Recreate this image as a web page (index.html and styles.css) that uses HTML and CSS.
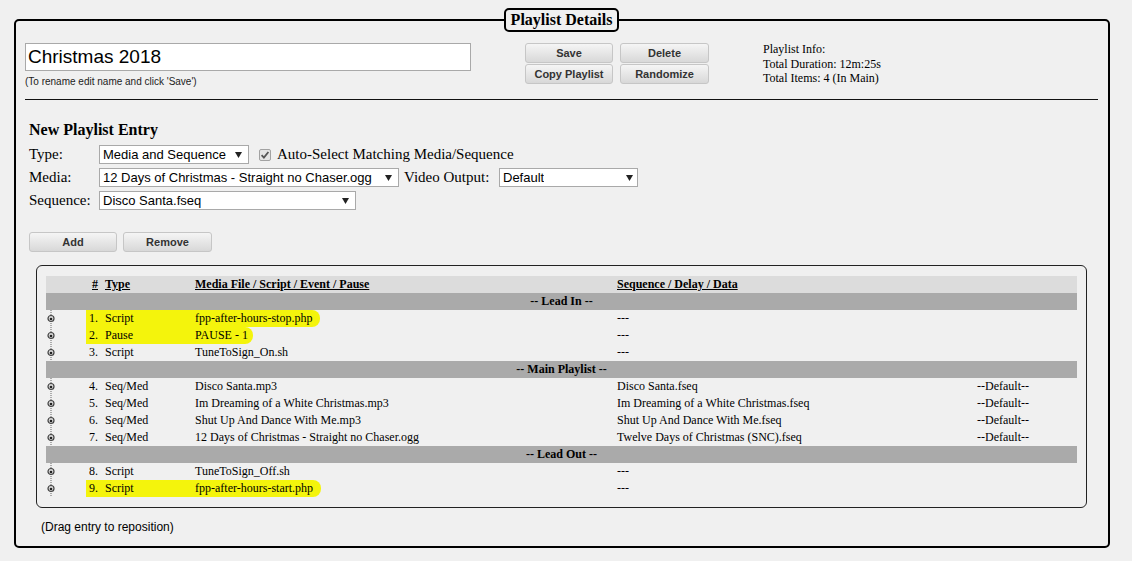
FILE: index.html
```html
<!DOCTYPE html>
<html>
<head>
<meta charset="utf-8">
<title>Playlist Details</title>
<link rel="stylesheet" href="styles.css">
</head>
<body>
<fieldset class="details">
  <legend class="details-legend">Playlist Details</legend>
  <div class="top">
    <div class="name-col">
      <div class="name-input">Christmas 2018</div>
      <div class="note">(To rename edit name and click 'Save')</div>
    </div>
    <div class="btn-grid">
      <div class="btn">Save</div>
      <div class="btn">Delete</div>
      <div class="btn">Copy Playlist</div>
      <div class="btn">Randomize</div>
    </div>
    <div class="info">
      <div>Playlist Info:</div>
      <div>Total Duration: 12m:25s</div>
      <div>Total Items: 4 (In Main)</div>
    </div>
  </div>
  <div class="rule"></div>

  <div class="entry">
    <div class="entry-title">New Playlist Entry</div>
    <div class="form-row">
      <span class="label">Type:</span>
      <span class="select sel-type"><span class="sel-text">Media and Sequence</span><svg class="arrow" width="7" height="6" viewBox="0 0 7 6"><path d="M0 0H7L3.5 6Z" fill="#222"/></svg></span>
      <svg class="check" width="12" height="12" viewBox="0 0 12 12"><rect x="0.5" y="0.5" width="11" height="11" rx="1.5" fill="#e4e4e4" stroke="#a2a2a2"/><path d="M2.6 6.2L4.9 8.6L9.4 3" fill="none" stroke="#555" stroke-width="1.8"/></svg>
      <span class="check-label">Auto-Select Matching Media/Sequence</span>
    </div>
    <div class="form-row">
      <span class="label">Media:</span>
      <span class="select sel-media"><span class="sel-text">12 Days of Christmas - Straight no Chaser.ogg</span><svg class="arrow" width="7" height="6" viewBox="0 0 7 6"><path d="M0 0H7L3.5 6Z" fill="#222"/></svg></span>
      <span class="label-video">Video Output:</span>
      <span class="select sel-video"><span class="sel-text">Default</span><svg class="arrow" width="7" height="6" viewBox="0 0 7 6"><path d="M0 0H7L3.5 6Z" fill="#222"/></svg></span>
    </div>
    <div class="form-row">
      <span class="label">Sequence:</span>
      <span class="select sel-seq"><span class="sel-text">Disco Santa.fseq</span><svg class="arrow" width="7" height="6" viewBox="0 0 7 6"><path d="M0 0H7L3.5 6Z" fill="#222"/></svg></span>
    </div>
    <div class="actions">
      <div class="btn btn-add">Add</div>
      <div class="btn btn-remove">Remove</div>
    </div>
  </div>

  <div class="entries">
    <table class="plist">
      <colgroup>
        <col class="c-handle"><col class="c-num"><col class="c-type"><col class="c-media"><col class="c-seq"><col>
      </colgroup>
      <thead>
        <tr class="head">
          <th></th><th class="num"><u>#</u></th><th class="type"><u>Type</u></th><th class="media"><u>Media File / Script / Event / Pause</u></th><th class="seq"><u>Sequence / Delay / Data</u></th><th></th>
        </tr>
      </thead>
      <tbody>
        <tr class="section"><td colspan="6">-- Lead In --</td></tr>
        <tr class="hl">
          <td class="handle"><svg width="10" height="17" viewBox="0 0 10 17"><g fill="#666"><rect x="4.5" y="0" width="1" height="1"/><rect x="4.5" y="2" width="1" height="1"/><rect x="4.5" y="4" width="1" height="1"/><rect x="4.5" y="13" width="1" height="1"/><rect x="4.5" y="15" width="1" height="1"/></g><circle cx="5" cy="8.5" r="3" fill="#d8d8d8" stroke="#444" stroke-width="1.2"/><circle cx="5" cy="9" r="1.3" fill="#222"/></svg></td>
          <td class="num">1.</td><td class="type">Script</td><td class="media"><span class="mark mark-1">fpp-after-hours-stop.php</span></td><td class="seq">---</td><td class="def"></td>
        </tr>
        <tr class="hl">
          <td class="handle"><svg width="10" height="17" viewBox="0 0 10 17"><g fill="#666"><rect x="4.5" y="0" width="1" height="1"/><rect x="4.5" y="2" width="1" height="1"/><rect x="4.5" y="4" width="1" height="1"/><rect x="4.5" y="13" width="1" height="1"/><rect x="4.5" y="15" width="1" height="1"/></g><circle cx="5" cy="8.5" r="3" fill="#d8d8d8" stroke="#444" stroke-width="1.2"/><circle cx="5" cy="9" r="1.3" fill="#222"/></svg></td>
          <td class="num">2.</td><td class="type">Pause</td><td class="media"><span class="mark mark-2">PAUSE - 1</span></td><td class="seq">---</td><td class="def"></td>
        </tr>
        <tr>
          <td class="handle"><svg width="10" height="17" viewBox="0 0 10 17"><g fill="#666"><rect x="4.5" y="0" width="1" height="1"/><rect x="4.5" y="2" width="1" height="1"/><rect x="4.5" y="4" width="1" height="1"/><rect x="4.5" y="13" width="1" height="1"/><rect x="4.5" y="15" width="1" height="1"/></g><circle cx="5" cy="8.5" r="3" fill="#d8d8d8" stroke="#444" stroke-width="1.2"/><circle cx="5" cy="9" r="1.3" fill="#222"/></svg></td>
          <td class="num">3.</td><td class="type">Script</td><td class="media">TuneToSign_On.sh</td><td class="seq">---</td><td class="def"></td>
        </tr>
        <tr class="section"><td colspan="6">-- Main Playlist --</td></tr>
        <tr>
          <td class="handle"><svg width="10" height="17" viewBox="0 0 10 17"><g fill="#666"><rect x="4.5" y="0" width="1" height="1"/><rect x="4.5" y="2" width="1" height="1"/><rect x="4.5" y="4" width="1" height="1"/><rect x="4.5" y="13" width="1" height="1"/><rect x="4.5" y="15" width="1" height="1"/></g><circle cx="5" cy="8.5" r="3" fill="#d8d8d8" stroke="#444" stroke-width="1.2"/><circle cx="5" cy="9" r="1.3" fill="#222"/></svg></td>
          <td class="num">4.</td><td class="type">Seq/Med</td><td class="media">Disco Santa.mp3</td><td class="seq">Disco Santa.fseq</td><td class="def">--Default--</td>
        </tr>
        <tr>
          <td class="handle"><svg width="10" height="17" viewBox="0 0 10 17"><g fill="#666"><rect x="4.5" y="0" width="1" height="1"/><rect x="4.5" y="2" width="1" height="1"/><rect x="4.5" y="4" width="1" height="1"/><rect x="4.5" y="13" width="1" height="1"/><rect x="4.5" y="15" width="1" height="1"/></g><circle cx="5" cy="8.5" r="3" fill="#d8d8d8" stroke="#444" stroke-width="1.2"/><circle cx="5" cy="9" r="1.3" fill="#222"/></svg></td>
          <td class="num">5.</td><td class="type">Seq/Med</td><td class="media">Im Dreaming of a White Christmas.mp3</td><td class="seq">Im Dreaming of a White Christmas.fseq</td><td class="def">--Default--</td>
        </tr>
        <tr>
          <td class="handle"><svg width="10" height="17" viewBox="0 0 10 17"><g fill="#666"><rect x="4.5" y="0" width="1" height="1"/><rect x="4.5" y="2" width="1" height="1"/><rect x="4.5" y="4" width="1" height="1"/><rect x="4.5" y="13" width="1" height="1"/><rect x="4.5" y="15" width="1" height="1"/></g><circle cx="5" cy="8.5" r="3" fill="#d8d8d8" stroke="#444" stroke-width="1.2"/><circle cx="5" cy="9" r="1.3" fill="#222"/></svg></td>
          <td class="num">6.</td><td class="type">Seq/Med</td><td class="media">Shut Up And Dance With Me.mp3</td><td class="seq">Shut Up And Dance With Me.fseq</td><td class="def">--Default--</td>
        </tr>
        <tr>
          <td class="handle"><svg width="10" height="17" viewBox="0 0 10 17"><g fill="#666"><rect x="4.5" y="0" width="1" height="1"/><rect x="4.5" y="2" width="1" height="1"/><rect x="4.5" y="4" width="1" height="1"/><rect x="4.5" y="13" width="1" height="1"/><rect x="4.5" y="15" width="1" height="1"/></g><circle cx="5" cy="8.5" r="3" fill="#d8d8d8" stroke="#444" stroke-width="1.2"/><circle cx="5" cy="9" r="1.3" fill="#222"/></svg></td>
          <td class="num">7.</td><td class="type">Seq/Med</td><td class="media">12 Days of Christmas - Straight no Chaser.ogg</td><td class="seq">Twelve Days of Christmas (SNC).fseq</td><td class="def">--Default--</td>
        </tr>
        <tr class="section"><td colspan="6">-- Lead Out --</td></tr>
        <tr>
          <td class="handle"><svg width="10" height="17" viewBox="0 0 10 17"><g fill="#666"><rect x="4.5" y="0" width="1" height="1"/><rect x="4.5" y="2" width="1" height="1"/><rect x="4.5" y="4" width="1" height="1"/><rect x="4.5" y="13" width="1" height="1"/><rect x="4.5" y="15" width="1" height="1"/></g><circle cx="5" cy="8.5" r="3" fill="#d8d8d8" stroke="#444" stroke-width="1.2"/><circle cx="5" cy="9" r="1.3" fill="#222"/></svg></td>
          <td class="num">8.</td><td class="type">Script</td><td class="media">TuneToSign_Off.sh</td><td class="seq">---</td><td class="def"></td>
        </tr>
        <tr class="hl">
          <td class="handle"><svg width="10" height="17" viewBox="0 0 10 17"><g fill="#666"><rect x="4.5" y="0" width="1" height="1"/><rect x="4.5" y="2" width="1" height="1"/><rect x="4.5" y="4" width="1" height="1"/><rect x="4.5" y="13" width="1" height="1"/><rect x="4.5" y="15" width="1" height="1"/></g><circle cx="5" cy="8.5" r="3" fill="#d8d8d8" stroke="#444" stroke-width="1.2"/><circle cx="5" cy="9" r="1.3" fill="#222"/></svg></td>
          <td class="num">9.</td><td class="type">Script</td><td class="media"><span class="mark mark-1">fpp-after-hours-start.php</span></td><td class="seq">---</td><td class="def"></td>
        </tr>
      </tbody>
    </table>
  </div>
  <div class="drag-note">(Drag entry to reposition)</div>
</fieldset>
</body>
</html>
```
FILE: styles.css
```css
body {
  margin: 0;
  background: #f0f0f0;
  font-family: "Liberation Serif", "Times New Roman", serif;
  color: #000;
}

.details {
  margin: 8px 22px 0 14px;
  border: 2px solid #000;
  border-radius: 5px;
  padding: 11px 10px 12px 9px;
  min-width: 0;
}

.details-legend {
  margin: 0 auto;
  padding: 1px 5px;
  border: 2px solid #000;
  border-radius: 5px;
  background: #f0f0f0;
  font: bold 16px/18px "Liberation Serif", serif;
}

.top {
  display: flex;
  align-items: flex-start;
}

.name-col {
  width: 446px;
}

.name-input {
  box-sizing: border-box;
  height: 28px;
  border: 1px solid #a9a9a9;
  background: #fff;
  padding-left: 2px;
  font: 19px/26px "Liberation Sans", Arial, sans-serif;
}

.note {
  margin-top: 5px;
  font: 10px/11px "Liberation Sans", Arial, sans-serif;
  color: #222;
}

.btn-grid {
  margin-left: 54px;
  display: grid;
  grid-template-columns: 88px 89px;
  column-gap: 7px;
  row-gap: 1px;
}

.btn {
  box-sizing: border-box;
  height: 20px;
  border: 1px solid #c6c6c6;
  border-radius: 3px;
  background: linear-gradient(#f5f5f5, #d8d8d8);
  color: #333;
  text-align: center;
  font: bold 11px/18px "Liberation Sans", Arial, sans-serif;
}

.info {
  margin-left: 54px;
  margin-top: -1px;
  font: 12px/14.5px "Liberation Serif", serif;
}

.rule {
  margin-top: 12px;
  border-top: 1px solid #111;
}

.entry {
  margin-left: 4px;
}

.entry-title {
  margin: 21px 0 6px;
  font: bold 16px/18px "Liberation Serif", serif;
}

.form-row {
  display: flex;
  align-items: center;
  height: 19px;
  margin-bottom: 4px;
  font-size: 15px;
  white-space: nowrap;
}

.label {
  width: 70px;
}

.select {
  box-sizing: border-box;
  display: flex;
  align-items: center;
  justify-content: space-between;
  height: 19px;
  border: 1px solid #a9a9a9;
  background: #fff;
  padding: 0 6px 0 3px;
  font: 13px/17px "Liberation Sans", Arial, sans-serif;
  white-space: nowrap;
}

.sel-text {
  overflow: hidden;
}

.sel-type { width: 150px; }
.sel-media { width: 300px; }
.sel-video { width: 139px; padding-right: 4px; }
.sel-seq { width: 257px; }

.arrow {
  flex: none;
}

.check {
  margin-left: 10px;
  flex: none;
}

.check-label {
  margin-left: 6px;
}

.label-video {
  margin-left: 5px;
  width: 95px;
}

.actions {
  margin-top: 22px;
  display: flex;
  gap: 6px;
}

.btn-add { width: 88px; }
.btn-remove { width: 89px; }

.entries {
  margin: 13px 11px 0 11px;
  border: 1px solid #222;
  border-radius: 6px;
  padding: 10px 9px 10px;
}

.plist {
  width: 100%;
  table-layout: fixed;
  border-collapse: collapse;
  font: 12px/17px "Liberation Serif", serif;
}

.c-handle { width: 40px; }
.c-num { width: 14px; }
.c-type { width: 92px; }
.c-media { width: 422px; }
.c-seq { width: 360px; }

.plist th,
.plist td {
  padding: 0;
  height: 17px;
  white-space: nowrap;
  text-align: left;
  vertical-align: middle;
}

.plist .head th {
  background: #dcdcdc;
  font-weight: bold;
}

.plist .num {
  text-align: right;
  padding-right: 2px;
}

.plist .type {
  padding-left: 5px;
}

.plist .media,
.plist .seq,
.plist .def {
  padding-left: 3px;
}

.plist .section td {
  background: #aaaaaa;
  text-align: center;
  font-weight: bold;
}

.plist .handle {
  padding-left: 0;
  line-height: 0;
}

.plist .handle svg {
  display: block;
}

.plist .hl .num,
.plist .hl .type {
  background: #f4f40c;
}

.plist .hl .media {
  padding-left: 0;
}

.mark {
  display: inline-block;
  background: #f4f40c;
  padding-left: 3px;
  border-radius: 0 8px 8px 0;
}

.mark-1 { padding-right: 8px; }
.mark-2 { padding-right: 5px; }

.drag-note {
  margin: 12px 0 0 16px;
  font: 12px/14px "Liberation Sans", Arial, sans-serif;
}
```
